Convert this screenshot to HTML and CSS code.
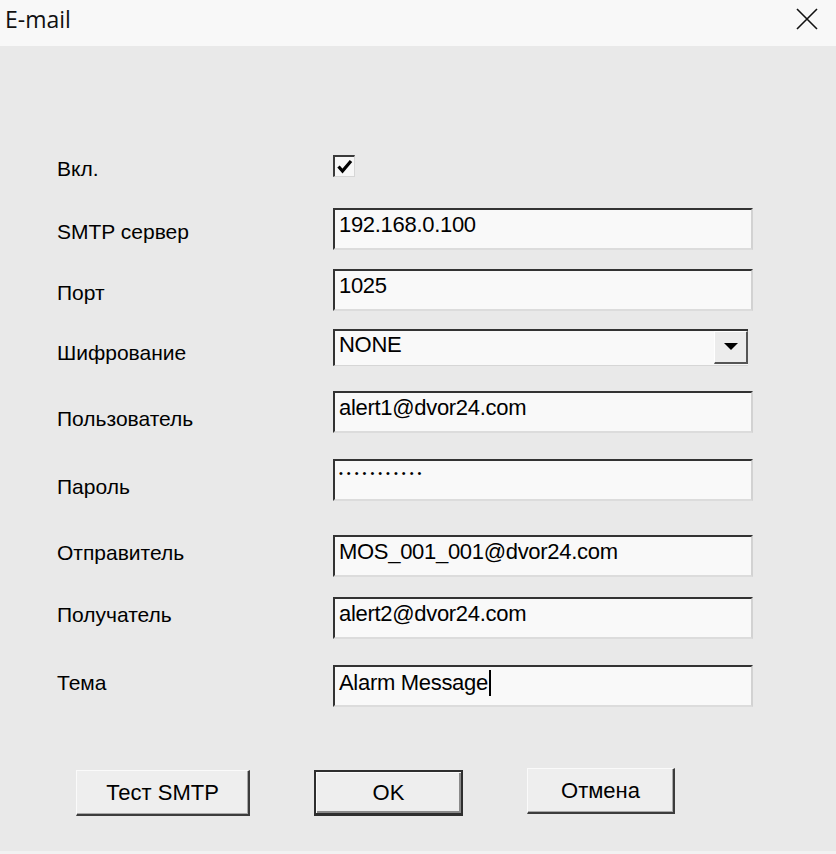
FILE: index.html
```html
<!DOCTYPE html>
<html lang="ru">

<head>
  <meta charset="UTF-8" />
  <meta name="viewport" content="width=device-width, initial-scale=1.0" />
  <title>E-mail</title>
  <link rel="stylesheet" href="styles.css">
</head>

<body>
  <div class="dialog">
    <div class="titlebar">
      <span class="title">E-mail</span>
      <button class="close_btn" aria-label="Close">
        <svg width="22" height="22" viewBox="0 0 22 22">
          <path d="M1 1 L21 21 M21 1 L1 21" stroke="#111" stroke-width="1.6" fill="none" />
        </svg>
      </button>
    </div>

    <div class="content">
      <div class="form">
        <div class="lbl lbl_top">Вкл.</div>
        <div class="checkbox">
          <svg width="18" height="18" viewBox="0 0 18 18">
            <path d="M2.5 8.5 L6.5 13 L15 3" stroke="#000" stroke-width="3.2" fill="none" />
          </svg>
        </div>

        <div class="lbl">SMTP сервер</div>
        <div class="field">192.168.0.100</div>

        <div class="lbl">Порт</div>
        <div class="field">1025</div>

        <div class="lbl">Шифрование</div>
        <div class="select">
          <span class="select_value">NONE</span>
          <span class="select_btn">
            <svg width="14" height="8" viewBox="0 0 14 8">
              <path d="M0 0 L14 0 L7 7 Z" fill="#000" />
            </svg>
          </span>
        </div>

        <div class="lbl lbl_low">Пользователь</div>
        <div class="field">alert1@dvor24.com</div>

        <div class="lbl lbl_low">Пароль</div>
        <div class="field field_pw">•••••••••••</div>

        <div class="lbl lbl_high">Отправитель</div>
        <div class="field">MOS_001_001@dvor24.com</div>

        <div class="lbl lbl_high">Получатель</div>
        <div class="field">alert2@dvor24.com</div>

        <div class="lbl lbl_high">Тема</div>
        <div class="field">Alarm Message<span class="caret"></span></div>
      </div>

      <div class="actions">
        <button class="btn btn_wide">Тест SMTP</button>
        <button class="btn btn_default">OK</button>
        <button class="btn btn_cancel">Отмена</button>
      </div>
    </div>
  </div>
</body>

</html>
```

FILE: styles.css
```css
body {
  margin: 0;
  font-family: 'Liberation Sans', Arial, sans-serif;
  color: #000;
  background-color: #e9e9e9;
}

.dialog {
  width: 836px;
  height: 854px;
  box-sizing: border-box;
  background-color: #e9e9e9;
  border-bottom: 3px solid #f2f2f2;
}

.titlebar {
  height: 46px;
  display: flex;
  justify-content: space-between;
  align-items: flex-start;
  padding: 0 18px 0 5px;
  background-color: #f8f8f8;
}

.title {
  font-family: 'Open Sans', 'Noto Sans', sans-serif;
  font-size: 23px;
  line-height: 38px;
  color: #111;
}

.close_btn {
  margin-top: 8px;
  padding: 0;
  border: 0;
  background: transparent;
  width: 22px;
  height: 22px;
}

.content {
  padding: 109px 0 0 57px;
}

.form {
  display: grid;
  grid-template-columns: 276px 420px;
  grid-template-rows: 53px 61px 60px 62px 68px 76px 62px 68px 42px;
  align-items: start;
}

.lbl {
  font-size: 21px;
  line-height: 21px;
  padding-top: 13px;
  white-space: nowrap;
}

.lbl_top {
  padding-top: 3px;
}

.lbl_low {
  padding-top: 17px;
}

.lbl_high {
  padding-top: 7px;
}

.checkbox {
  width: 22px;
  height: 22px;
  box-sizing: border-box;
  display: flex;
  align-items: center;
  justify-content: center;
  background-color: #f7f7f7;
  border-top: 2px solid #3a3a3a;
  border-left: 2px solid #3a3a3a;
  border-right: 1px solid #d6d6d6;
  border-bottom: 1px solid #d6d6d6;
}

.field {
  width: 420px;
  height: 42px;
  box-sizing: border-box;
  padding: 3px 4px 0 4px;
  font-size: 22px;
  letter-spacing: -0.3px;
  line-height: 24px;
  white-space: nowrap;
  background-color: #f9f9f9;
  border-top: 2px solid #333;
  border-left: 2px solid #333;
  border-right: 2px solid #d2d2d2;
  border-bottom: 2px solid #dcdcdc;
}

.field_pw {
  font-size: 11px;
  line-height: 14px;
  letter-spacing: 4px;
  padding-top: 5px;
}

.caret {
  display: inline-block;
  width: 2px;
  height: 26px;
  margin-left: 1px;
  vertical-align: -6px;
  background-color: #000;
}

.select {
  width: 415px;
  height: 37px;
  box-sizing: border-box;
  display: flex;
  justify-content: space-between;
  align-items: flex-start;
  padding: 0 0 0 4px;
  background-color: #f9f9f9;
  border-top: 2px solid #333;
  border-left: 2px solid #333;
  border-bottom: 1px solid #d6d6d6;
}

.select_value {
  font-size: 22px;
  letter-spacing: -0.3px;
  line-height: 24px;
  padding-top: 2px;
}

.select_btn {
  width: 34px;
  height: 33px;
  box-sizing: border-box;
  display: flex;
  align-items: center;
  justify-content: center;
  background-color: #ececec;
  border-top: 1px solid #fff;
  border-left: 1px solid #fff;
  border-right: 2px solid #555;
  border-bottom: 2px solid #555;
}

.actions {
  display: flex;
  gap: 64px;
  margin-top: 63px;
  padding-left: 19px;
  align-items: flex-start;
}

.btn {
  height: 46px;
  box-sizing: border-box;
  font-family: 'Liberation Sans', Arial, sans-serif;
  font-size: 22px;
  color: #000;
  background-color: #eeeeee;
  border-top: 1px solid #fafafa;
  border-left: 1px solid #fafafa;
  border-right: 2px solid #3c3c3c;
  border-bottom: 2px solid #3c3c3c;
  box-shadow: inset -1px -1px 0 #a8a8a8;
  padding: 0;
}

.btn_wide {
  width: 174px;
}

.btn_default {
  width: 149px;
  border: 2px solid #2e2e2e;
  border-bottom-width: 3px;
  box-shadow: inset 1px 1px 0 #fafafa, inset -2px -2px 0 #8a8a8a;
}

.btn_cancel {
  width: 148px;
  margin-top: -2px;
}
```
